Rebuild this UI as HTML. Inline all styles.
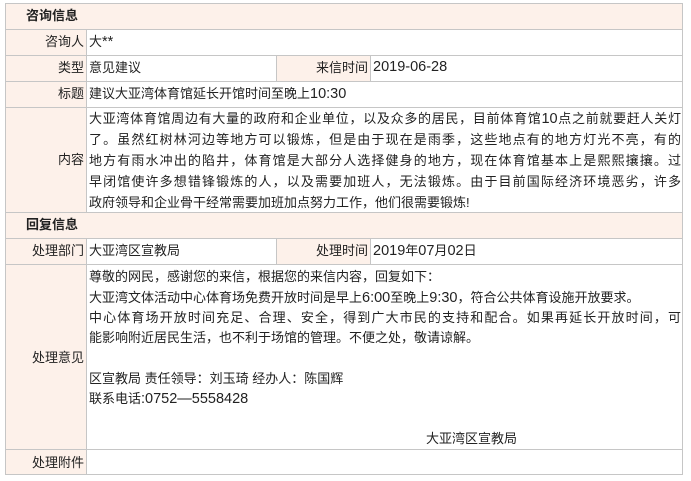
<!DOCTYPE html>
<html><head><meta charset="utf-8"><style>
body{margin:0;background:#fff;width:691px;height:481px;position:relative;font-family:"Liberation Sans","Noto Sans CJK SC","WenQuanYi Zen Hei",sans-serif;font-size:13px;color:#222;}
.b{position:absolute;box-sizing:border-box;}
.l{background:#fdf1ea;}
.h{background:#fdf1ea;}
.hl{position:absolute;background:#c6c6c6;height:1px;left:5px;width:678px;}
.vl{position:absolute;background:#c6c6c6;width:1px;}
.t{position:absolute;white-space:nowrap;line-height:21px;}
.r{text-align:right;}
.n{font-size:14.5px;}
.j{width:592px;white-space:normal;text-align:justify;text-align-last:justify}
</style></head><body>
<div class="b h" style="left:5px;top:3px;width:678px;height:26px"></div>
<div class="b l" style="left:5px;top:29px;width:81px;height:183px"></div>
<div class="b l" style="left:276px;top:55px;width:94px;height:26px"></div>
<div class="b h" style="left:5px;top:212px;width:678px;height:26px"></div>
<div class="b l" style="left:5px;top:238px;width:81px;height:237px"></div>
<div class="b l" style="left:276px;top:238px;width:94px;height:26px"></div>

<div class="hl" style="top:3px"></div>
<div class="hl" style="top:29px"></div>
<div class="hl" style="top:55px"></div>
<div class="hl" style="top:81px"></div>
<div class="hl" style="top:107px"></div>
<div class="hl" style="top:212px"></div>
<div class="hl" style="top:238px"></div>
<div class="hl" style="top:264px"></div>
<div class="hl" style="top:449px"></div>
<div class="hl" style="top:474px"></div>
<div class="vl" style="left:5px;top:3px;height:472px"></div>
<div class="vl" style="left:682px;top:3px;height:472px"></div>
<div class="vl" style="left:86px;top:29px;height:183px"></div>
<div class="vl" style="left:86px;top:238px;height:237px"></div>
<div class="vl" style="left:276px;top:55px;height:26px"></div>
<div class="vl" style="left:370px;top:55px;height:26px"></div>
<div class="vl" style="left:276px;top:238px;height:26px"></div>
<div class="vl" style="left:370px;top:238px;height:26px"></div>

<div class="t" style="left:26px;top:5px;font-weight:bold">咨询信息</div>
<div class="t r" style="left:5px;width:79px;top:31px">咨询人</div>
<div class="t" style="left:89px;top:31px">大<span class="n">**</span></div>
<div class="t r" style="left:5px;width:79px;top:57px">类型</div>
<div class="t" style="left:89px;top:57px">意见建议</div>
<div class="t r" style="left:276px;width:92px;top:57px">来信时间</div>
<div class="t n" style="left:373px;top:57px">2019-06-28</div>
<div class="t r" style="left:5px;width:79px;top:83px">标题</div>
<div class="t" style="left:89px;top:83px">建议大亚湾体育馆延长开馆时间至晚上<span class="n">10:30</span></div>
<div class="t r" style="left:5px;width:79px;top:149px">内容</div>
<div class="t j" style="left:89px;top:108px">大亚湾体育馆周边有大量的政府和企业单位，以及众多的居民，目前体育馆<span class="n">10</span>点之前就要赶人关灯</div>
<div class="t j" style="left:89px;top:129px">了。虽然红树林河边等地方可以锻炼，但是由于现在是雨季，这些地点有的地方灯光不亮，有的</div>
<div class="t j" style="left:89px;top:150px">地方有雨水冲出的陷井，体育馆是大部分人选择健身的地方，现在体育馆基本上是熙熙攘攘。过</div>
<div class="t j" style="left:89px;top:171px">早闭馆使许多想错锋锻炼的人，以及需要加班人，无法锻炼。由于目前国际经济环境恶劣，许多</div>
<div class="t" style="left:89px;top:192px">政府领导和企业骨干经常需要加班加点努力工作，他们很需要锻炼!</div>

<div class="t" style="left:26px;top:214px;font-weight:bold">回复信息</div>
<div class="t r" style="left:5px;width:79px;top:240px">处理部门</div>
<div class="t" style="left:89px;top:240px">大亚湾区宣教局</div>
<div class="t r" style="left:276px;width:92px;top:240px">处理时间</div>
<div class="t" style="left:373px;top:240px"><span class="n">2019</span>年<span class="n">07</span>月<span class="n">02</span>日</div>
<div class="t r" style="left:5px;width:79px;top:347px">处理意见</div>
<div class="t" style="left:89px;top:266px">尊敬的网民，感谢您的来信，根据您的来信内容，回复如下：</div>
<div class="t" style="left:89px;top:287px">大亚湾文体活动中心体育场免费开放时间是早上<span class="n">6:00</span>至晚上<span class="n">9:30</span>，符合公共体育设施开放要求。</div>
<div class="t j" style="left:89px;top:307px">中心体育场开放时间充足、合理、安全，得到广大市民的支持和配合。如果再延长开放时间，可</div>
<div class="t" style="left:89px;top:327px">能影响附近居民生活，也不利于场馆的管理。不便之处，敬请谅解。</div>
<div class="t" style="left:89px;top:368px">区宣教局 责任领导：刘玉琦 经办人：陈国辉</div>
<div class="t" style="left:89px;top:388px">联系电话<span class="n">:0752—5558428</span></div>
<div class="t" style="left:426px;top:428px">大亚湾区宣教局</div>
<div class="t r" style="left:5px;width:79px;top:452px">处理附件</div>
</body></html>
